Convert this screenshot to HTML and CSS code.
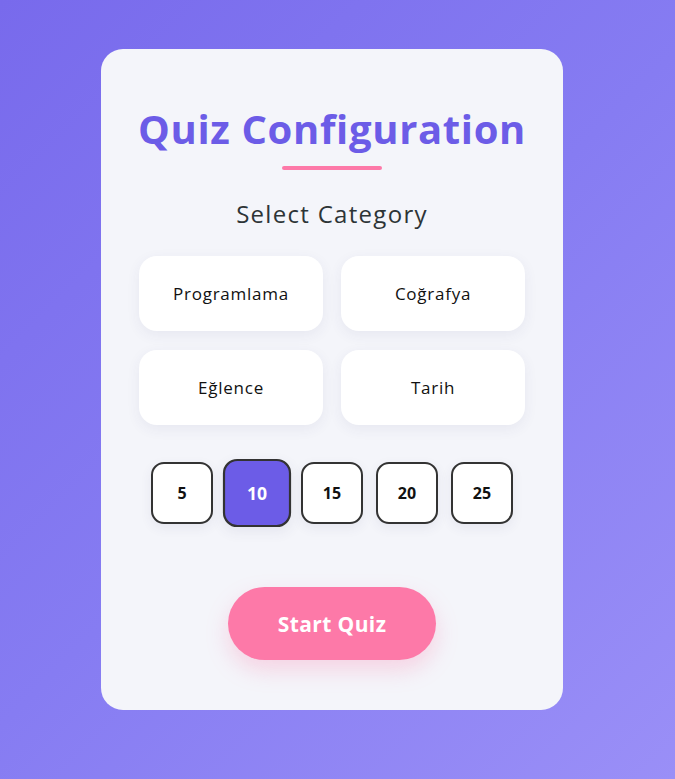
FILE: index.html
```html
<!DOCTYPE html>
<html lang="tr">
<head>
<meta charset="utf-8">
<title>Quiz Configuration</title>
<link rel="stylesheet" href="styles.css">
</head>
<body>
<main class="card">
  <h1 class="title">Quiz Configuration</h1>
  <div class="underline"></div>
  <h2 class="subtitle">Select Category</h2>
  <div class="categories">
    <button class="category">Programlama</button>
    <button class="category">Coğrafya</button>
    <button class="category">Eğlence</button>
    <button class="category">Tarih</button>
  </div>
  <div class="counts">
    <button class="count">5</button>
    <button class="count active">10</button>
    <button class="count">15</button>
    <button class="count">20</button>
    <button class="count">25</button>
  </div>
  <div class="start-wrap">
    <button class="start">Start Quiz</button>
  </div>
</main>
</body>
</html>
```
FILE: styles.css
```css
* { box-sizing: border-box; }
html, body { margin: 0; height: 100%; }
body {
  background: linear-gradient(135deg, #786aec 0%, #867cf2 50%, #9a8ff7 100%);
  font-family: "Open Sans", "Noto Sans", sans-serif;
  padding: 49px 0 0 101px;
}
.card {
  width: 462px;
  height: 661px;
  background: #f4f5fa;
  border-radius: 22px;
  padding: 56px 38px 50px;
}
.title {
  margin: 0 -20px;
  white-space: nowrap;
  text-align: center;
  color: #6c5ce7;
  font-size: 40px;
  line-height: 48px;
  font-weight: 700;
  letter-spacing: 0.65px;
}
.underline {
  width: 100px;
  height: 4px;
  border-radius: 2px;
  background: #fd79a8;
  margin: 13px auto 0;
}
.subtitle {
  margin: 28px 0 0;
  text-align: center;
  font-size: 24px;
  line-height: 32px;
  font-weight: 500;
  color: #2d3436;
  letter-spacing: 1.3px;
}
.categories {
  margin-top: 26px;
  display: grid;
  grid-template-columns: 184px 184px;
  column-gap: 18px;
  row-gap: 19px;
}
.category {
  height: 75px;
  border: none;
  background: #fff;
  border-radius: 18px;
  box-shadow: 0 4px 14px rgba(60, 60, 120, 0.07);
  font-family: inherit;
  font-size: 17px;
  color: #111;
  letter-spacing: 0.75px;
}
.counts {
  margin-top: 37px;
  display: flex;
  justify-content: center;
  gap: 13px;
}
.count {
  width: 62px;
  height: 62px;
  border: 2px solid #333;
  border-radius: 13px;
  background: #fff;
  font-family: inherit;
  font-weight: 700;
  font-size: 16px;
  color: #111;
  box-shadow: 0 4px 12px rgba(60, 60, 120, 0.08);
}
.count.active {
  background: #6c5ce7;
  color: #fff;
  transform: scale(1.1);
}
.start-wrap {
  margin-top: 63px;
  display: flex;
  justify-content: center;
}
.start {
  width: 208px;
  height: 73px;
  border: none;
  border-radius: 37px;
  background: #fd79a8;
  color: #fff;
  font-family: inherit;
  font-weight: 700;
  font-size: 21px;
  letter-spacing: 0.4px;
  box-shadow: 0 10px 22px rgba(253, 121, 168, 0.28);
}
```
